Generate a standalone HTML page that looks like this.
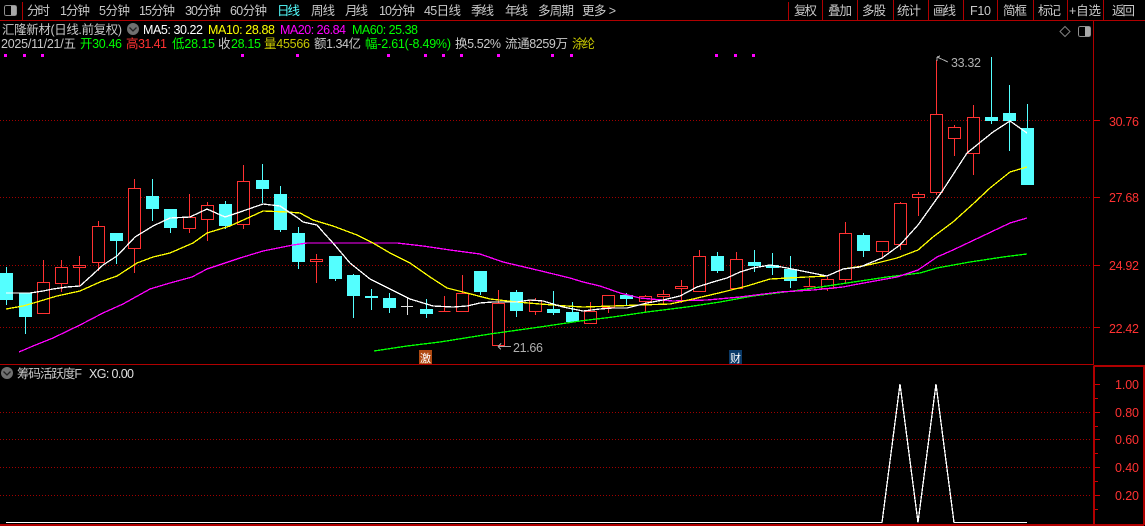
<!DOCTYPE html>
<html><head><meta charset="utf-8"><style>
html,body{margin:0;padding:0;background:#000;width:1145px;height:526px;overflow:hidden}
svg{display:block}
text{font-family:"Liberation Sans","WenQuanYi Zen Hei","Noto Sans CJK SC",sans-serif;font-size:12.500px;fill:#c8c8c8}
.r{fill:#ff3232}.g{fill:#00ff00}.y{fill:#c8c800}
</style></head><body>
<svg width="1145" height="526" viewBox="0 0 1145 526" xmlns="http://www.w3.org/2000/svg">
<rect width="1145" height="526" fill="#000"/>
<g shape-rendering="crispEdges">
<path d="M0 20.500H1145M22.500 2V20M788.500 2V20M822.500 0V20M857.500 0V20M893.500 0V20M928.500 0V20M963.500 0V20M997.500 0V20M1033.500 0V20M1067.500 0V20M1103.500 0V20M1093.500 21V364M0 364.500H1094" stroke="#b00000" fill="none"/>
<path d="M1094 365.500V525M1094 366H1144V525M0 525H1144" stroke="#b00000" stroke-width="2" fill="none"/>
<path d="M0 120.500H1090M0 197.500H1090M0 265.500H1090M0 327.500H1090M0 412.500H1090M0 439.500H1090M0 467.500H1090M0 495.500H1090" stroke="#a00000" stroke-dasharray="1 2" fill="none"/>
<path d="M1094 120.500h6M1094 197.500h6M1094 265.500h6M1094 327.500h6M1095 384.500h5M1095 412.500h5M1095 439.500h5M1095 467.500h5M1095 495.500h5M1095 398.500h3M1095 426.500h3M1095 453.500h3M1095 481.500h3M1095 509.500h3" stroke="#d00000" fill="none"/>
<path d="M4 54h3v3H4zM23 54h3v3h-3zM41 54h3v3h-3zM241 54h3v3h-3zM296 54h3v3h-3zM387 54h3v3h-3zM424 54h3v3h-3zM442 54h3v3h-3zM460 54h3v3h-3zM497 54h3v3h-3zM551 54h3v3h-3zM570 54h3v3h-3zM715 54h3v3h-3zM734 54h3v3h-3zM752 54h3v3h-3z" fill="#ff00ff"/>
<path fill="none" stroke="#54ffff" d="M6.500 267V305M25.500 317V334M116.500 241V264M152.500 179V221M170.500 228V233M225.500 201V229M262.500 164V203M280.500 186V232M298.500 227V269M335.500 279V281M353.500 274V318M371.500 289V310M389.500 293V313M426.500 299V318M480.500 292V295M516.500 290V317M553.500 291V315M572.500 302V312M626.500 293V306M717.500 252V273M754.500 250V272M772.500 253V275M790.500 256V288M863.500 233V257M991.500 57V124M1009.500 85V151M1027.500 104V128"/>
<path fill="#54ffff" d="M0 273h13V300H0zM19 293h13V317H19zM110 233h13V241h-13zM146 196h13V209h-13zM164 209h13V228h-13zM219 204h13V226h-13zM256 180h13V189h-13zM274 194h13V230h-13zM292 233h13V262h-13zM329 256h13V279h-13zM347 275h13V296h-13zM365 296h13V298h-13zM383 298h13V308h-13zM420 309h13V314h-13zM474 271h13V292h-13zM510 292h13V311h-13zM547 309h13V313h-13zM566 312h13V322h-13zM620 295h13V299h-13zM711 256h13V271h-13zM748 262h13V266h-13zM766 265h13V268h-13zM784 269h13V281h-13zM857 235h13V251h-13zM985 117h13V121h-13zM1003 113h13V121h-13zM1021 128h13V185h-13z"/>
<path fill="none" stroke="#ff3232" d="M43.500 260V282M61.500 260V267M61.500 284V292M79.500 256V265M79.500 268V287M98.500 221V226M98.500 263V271M134.500 179V188M134.500 249V273M189.500 194V217M189.500 229V233M207.500 202V205M207.500 220V241M243.500 165V181M243.500 225V229M316.500 254V259M316.500 262V283M444.500 296V311M462.500 275V293M498.500 290V303M535.500 298V300M535.500 312V315M590.500 302V311M608.500 308V313M645.500 295V296M645.500 302V312M663.500 290V294M663.500 297V304M681.500 280V286M681.500 289V303M699.500 250V256M736.500 252V259M809.500 278V286M827.500 277V279M827.500 289V291M845.500 222V233M845.500 280V283M882.500 252V257M900.500 202V203M900.500 245V250M918.500 192V194M918.500 198V216M936.500 60V114M936.500 193V195M954.500 125V127M954.500 139V156M973.500 105V117M973.500 154V175"/>
<path fill="#000" stroke="#ff3232" d="M37.500 282.500h12V313.500h-12zM55.500 267.500h12V283.500h-12zM73.500 265.500h12V267.500h-12zM92.500 226.500h12V262.500h-12zM128.500 188.500h12V248.500h-12zM183.500 217.500h12V228.500h-12zM201.500 205.500h12V219.500h-12zM237.500 181.500h12V224.500h-12zM310.500 259.500h12V261.500h-12zM438.500 311.500h12V311.500h-12zM456.500 293.500h12V311.500h-12zM492.500 303.500h12V345.500h-12zM529.500 300.500h12V311.500h-12zM584.500 311.500h12V323.500h-12zM602.500 295.500h12V307.500h-12zM639.500 296.500h12V301.500h-12zM657.500 294.500h12V296.500h-12zM675.500 286.500h12V288.500h-12zM693.500 256.500h12V291.500h-12zM730.500 259.500h12V288.500h-12zM803.500 286.500h12V286.500h-12zM821.500 279.500h12V288.500h-12zM839.500 233.500h12V279.500h-12zM876.500 241.500h12V251.500h-12zM894.500 203.500h12V244.500h-12zM912.500 194.500h12V197.500h-12zM930.500 114.500h12V192.500h-12zM948.500 127.500h12V138.500h-12zM967.500 117.500h12V153.500h-12z"/>
<path fill="none" stroke="#e0e0e0" d="M401 306.500h12M407.500 297V315"/>
<polyline fill="none" stroke="#00ff00" stroke-width="1.300" points="374,351 407,346 440,342 490,334 540,327 580,321 613,317 647,312 687,307 720,302 753,296 793,291 827,286 887,277 920,273 937,268 970,262 1003,257 1027,254"/>
<polyline fill="none" stroke="#ff00ff" stroke-width="1.300" points="19,352 33,346 53,338 80,325 103,313 123,304 150,289 170,283 192,277 207,269 240,258 263,251 283,247 293,245 307,243 343,243 397,243 423,246 450,250 480,254 503,262 537,270 570,278 583,282 600,286 620,293 640,298 673,301 707,300 740,297 780,292 813,290 843,287 853,285 897,277 918,270 937,257 953,250 1010,223 1027,218"/>
<polyline fill="none" stroke="#ffff00" stroke-width="1.300" points="6,309 23,306 37,302 57,296 80,291 100,282 117,276 137,263 153,257 170,253 193,243 207,233 230,226 250,217 263,211 287,212 300,213 313,220 333,226 357,235 373,243 390,253 410,263 430,277 447,288 463,292 490,299 517,302 540,304 567,306 583,307 613,306 640,305 670,304 693,299 723,292 747,286 770,279 807,277 827,276 843,269 863,266 877,263 897,258 918,250 933,237 953,222 973,204 990,188 1010,172 1027,167"/>
<polyline fill="none" stroke="#ffffff" stroke-width="1.300" points="6,293 30,293 43,291 53,289 67,287 80,286 90,277 103,265 117,256 135,237 153,226 170,218 190,217 207,209 225,217 243,211 263,204 280,206 298,218 303,222 317,225 323,232 333,243 350,263 370,279 390,289 410,299 433,306 453,307 467,306 480,303 493,302 517,302 530,300 543,301 563,307 583,311 600,309 613,308 627,308 647,303 663,300 680,296 697,287 713,282 727,278 740,272 753,268 770,265 787,268 807,272 827,276 843,269 860,267 882,258 900,245 918,225 943,190 967,153 993,132 1010,121 1027,133"/>
<polyline fill="none" stroke="#ffffff" stroke-width="1.300" points="6,522.500 882,522.500 900,384 918,522.500 936,384 954,522.500 1027,522.500"/>
<path fill="none" stroke="#a8a8a8" d="M498 346.500h13M498 346.500l3-3M498 346.500l3 3M937 57l11 5M937 57l3-1M937 57v4"/>
<rect x="419" y="350" width="13" height="14" fill="#b04a12"/>
<rect x="729" y="350" width="13" height="14" fill="#0a3a68"/>
<rect x="4.500" y="5.500" width="12" height="10" rx="2" fill="#000" stroke="#909090"/>
<rect x="11" y="6" width="5" height="9" fill="#a8a8a8"/>
<rect x="1078.500" y="26.500" width="12" height="10" rx="2" fill="#000" stroke="#909090"/>
<rect x="1085" y="27" width="5" height="9" fill="#a8a8a8"/>
</g>
<path d="M1065 26.500l5 5-5 5-5-5z" fill="none" stroke="#808080"/>
<circle cx="133" cy="29" r="6" fill="#707070"/><path d="M129.500 27.500l3.500 3.500 3.500-3.500" fill="none" stroke="#222" stroke-width="1.300"/>
<circle cx="7" cy="373" r="6" fill="#707070"/><path d="M3.500 371.500l3.500 3.500 3.500-3.500" fill="none" stroke="#222" stroke-width="1.300"/>
<text x="27" y="15" textLength="23">分时</text>
<text x="60" y="15" textLength="30">1分钟</text>
<text x="99" y="15" textLength="31">5分钟</text>
<text x="139" y="15" textLength="36">15分钟</text>
<text x="185" y="15" textLength="36">30分钟</text>
<text x="230" y="15" textLength="37">60分钟</text>
<text x="277" y="15" textLength="23" style="fill:#54ffff">日线</text>
<text x="311" y="15" textLength="24">周线</text>
<text x="345" y="15" textLength="23">月线</text>
<text x="379" y="15" textLength="36">10分钟</text>
<text x="424" y="15" textLength="37">45日线</text>
<text x="471" y="15" textLength="23">季线</text>
<text x="505" y="15" textLength="23">年线</text>
<text x="538" y="15" textLength="36">多周期</text>
<text x="582" y="15" textLength="34">更多 &gt;</text>
<text x="794" y="15" textLength="23">复权</text>
<text x="828" y="15" textLength="24">叠加</text>
<text x="862" y="15" textLength="24">多股</text>
<text x="897" y="15" textLength="24">统计</text>
<text x="933" y="15" textLength="23">画线</text>
<text x="970" y="15" textLength="21">F10</text>
<text x="1003" y="15" textLength="24">简框</text>
<text x="1038" y="15" textLength="23">标记</text>
<text x="1069" y="15" textLength="32">+自选</text>
<text x="1112" y="15" textLength="23">返回</text>
<text x="2" y="34" textLength="120">汇隆新材(日线.前复权)</text>
<text x="143" y="34" textLength="60" style="fill:#fff">MA5: 30.22</text>
<text x="208" y="34" textLength="67" style="fill:#ffff00">MA10: 28.88</text>
<text x="280" y="34" textLength="66" style="fill:#ff00ff">MA20: 26.84</text>
<text x="352" y="34" textLength="66" class="g">MA60: 25.38</text>
<text x="1" y="48" textLength="75">2025/11/21/五</text>
<text x="80" y="48" class="g" textLength="42">开30.46</text>
<text x="126" y="48" class="r" textLength="41">高31.41</text>
<text x="172" y="48" class="g" textLength="43">低28.15</text>
<text x="218" y="48">收</text>
<text x="231" y="48" class="g" textLength="30">28.15</text>
<text x="264" y="48" class="y" textLength="46">量45566</text>
<text x="314" y="48" textLength="47">额1.34亿</text>
<text x="365" y="48" class="g" textLength="86">幅-2.61(-8.49%)</text>
<text x="455" y="48" textLength="46">换5.52%</text>
<text x="505" y="48" textLength="63">流通8259万</text>
<text x="572" y="48" class="y" textLength="23">涂纶</text>
<text x="951" y="67" textLength="30" style="fill:#b0b0b0">33.32</text>
<text x="513" y="352" textLength="30" style="fill:#b0b0b0">21.66</text>
<text x="1109" y="126" class="r" textLength="30">30.76</text>
<text x="1109" y="202" class="r" textLength="30">27.68</text>
<text x="1109" y="270" class="r" textLength="30">24.92</text>
<text x="1109" y="333" class="r" textLength="30">22.42</text>
<text x="1115" y="389" class="r" textLength="24">1.00</text>
<text x="1115" y="417" class="r" textLength="24">0.80</text>
<text x="1115" y="444" class="r" textLength="24">0.60</text>
<text x="1115" y="472" class="r" textLength="24">0.40</text>
<text x="1115" y="500" class="r" textLength="24">0.20</text>
<text x="420" y="362" style="font-size:11px;fill:#fff">激</text>
<text x="730" y="362" style="font-size:11px;fill:#fff">财</text>
<text x="17" y="378" textLength="65">筹码活跃度F</text>
<text x="89" y="378" textLength="45" style="fill:#e0e0e0">XG: 0.00</text>
</svg>
</body></html>
